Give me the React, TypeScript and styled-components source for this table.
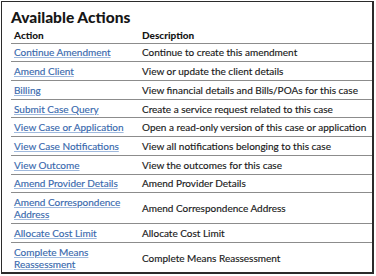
import React from "react";
import styled, { createGlobalStyle } from "styled-components";

const Global = createGlobalStyle`
  html, body { margin: 0; padding: 0; background: #ffffff; }
  body { font-family: Lato, "Open Sans", sans-serif; }
`;

const Panel = styled.section`
  margin: 1px 0 0 1px;
  width: 373px;
  height: 273px;
  border: 1px solid #2b2b2b;
  border-right-width: 2px;
  border-bottom-width: 2px;
  padding: 0 0 0 9px;
  box-sizing: border-box;
  overflow: hidden;
  background: #fff;
`;

const Title = styled.h2`
  margin: 0;
  padding: 7px 0 0 0;
  height: 24px;
  box-sizing: border-box;
  font-family: Lato, sans-serif;
  font-weight: 900;
  font-size: 15.5px;
  line-height: 17px;
  color: #161616;
`;

const Table = styled.table`
  border-collapse: collapse;
  width: 363px;
  table-layout: fixed;
`;

const HeadCell = styled.th`
  text-align: left;
  font-weight: 900;
  font-size: 10px;
  line-height: 12px;
  color: #161616;
  padding: 2.5px 3px 2px 3px;
  border-bottom: 1px solid #8c8c8c;
`;

const Row = styled.tr<{ $last?: boolean }>`
  border-bottom: ${(p) => (p.$last ? "none" : "1px solid #8c8c8c")};
`;

const Cell = styled.td`
  font-size: 10px;
  line-height: 12px;
  padding: 2.86px 3px 2.86px 3px;
  vertical-align: middle;
  color: #1a1a1a;
  white-space: nowrap;
  -webkit-text-stroke: 0.15px #1a1a1a;
`;

const LinkCell = styled(Cell)`
  white-space: normal;
  -webkit-text-stroke: 0.15px #3c6db0;
`;

const ActionLink = styled.a`
  color: #3868ad;
  text-decoration: underline;
  text-decoration-color: #9fb9dd;
  text-underline-offset: 1px;
  cursor: pointer;
`;

const actions: [string, string][] = [
  ["Continue Amendment", "Continue to create this amendment"],
  ["Amend Client", "View or update the client details"],
  ["Billing", "View financial details and Bills/POAs for this case"],
  ["Submit Case Query", "Create a service request related to this case"],
  ["View Case or Application", "Open a read-only version of this case or application"],
  ["View Case Notifications", "View all notifications belonging to this case"],
  ["View Outcome", "View the outcomes for this case"],
  ["Amend Provider Details", "Amend Provider Details"],
  ["Amend Correspondence Address", "Amend Correspondence Address"],
  ["Allocate Cost Limit", "Allocate Cost Limit"],
  ["Complete Means Reassessment", "Complete Means Reassessment"],
];

export default function App() {
  return (
    <>
      <Global />
      <Panel>
        <Title>Available Actions</Title>
        <Table>
          <colgroup>
            <col style={{ width: 128 }} />
            <col />
          </colgroup>
          <thead>
            <tr>
              <HeadCell>Action</HeadCell>
              <HeadCell>Description</HeadCell>
            </tr>
          </thead>
          <tbody>
            {actions.map(([a, d], i) => (
              <Row key={a} $last={i === actions.length - 1}>
                <LinkCell>
                  <ActionLink>{a}</ActionLink>
                </LinkCell>
                <Cell>{d}</Cell>
              </Row>
            ))}
          </tbody>
        </Table>
      </Panel>
    </>
  );
}
